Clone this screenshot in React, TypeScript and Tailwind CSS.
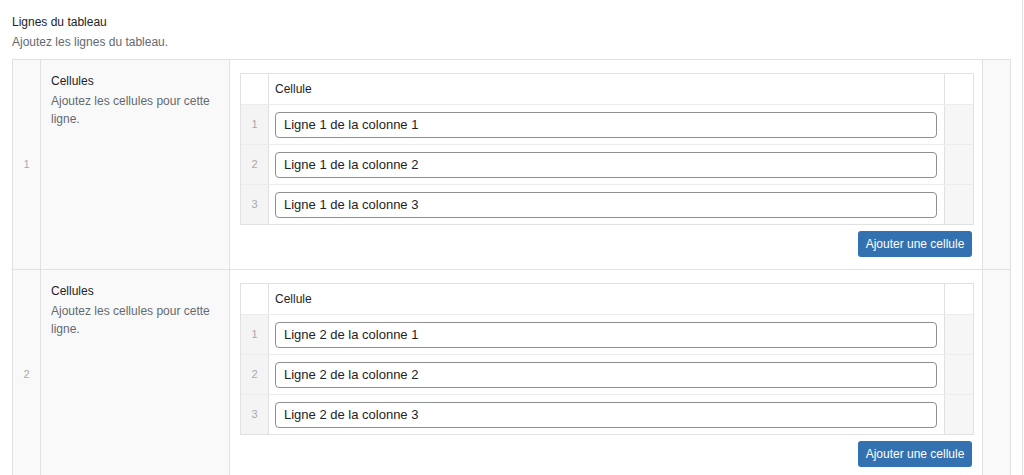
const rows = [1, 2]
const cells = [1, 2, 3]

function CellTable({ row }: { row: number }) {
  return (
    <div className="border border-[#e1e1e1]">
      <div className="flex h-[30px]">
        <div className="w-[28px] border-r border-[#e1e1e1]" />
        <div className="flex flex-1 items-center pl-[6px] text-[12px] text-[#1d2327]">Cellule</div>
        <div className="w-[29px] border-l border-[#e1e1e1]" />
      </div>
      {cells.map((c) => (
        <div key={c} className="flex h-[40px] border-t border-[#ececec]">
          <div className="flex w-[28px] items-center justify-center border-r border-[#e1e1e1] bg-[#f4f4f4] text-[11px] text-[#a7aaad]">
            {c}
          </div>
          <div className="flex flex-1 items-center pl-[6px] pr-[7px]">
            <input
              readOnly
              value={`Ligne ${row} de la colonne ${c}`}
              className="h-[26px] w-full rounded-[4px] border border-[#8c8f94] bg-white px-[8px] text-[13px] text-[#1d2327] outline-none"
            />
          </div>
          <div className="w-[29px] border-l border-[#e1e1e1] bg-[#f6f6f6]" />
        </div>
      ))}
    </div>
  )
}

export default function App() {
  return (
    <div
      className="h-[475px] w-[1023px] overflow-hidden border-r border-[#e0e0e0] bg-white pl-3 pr-[11px]"
      style={{ fontFamily: '"Liberation Sans", Arial, sans-serif' }}
    >
      <div className="pt-[14px] text-[12px] leading-[16px] text-[#1d2327]">Lignes du tableau</div>
      <div className="mt-[3px] text-[12px] leading-[18px] text-[#646970]">Ajoutez les lignes du tableau.</div>

      <div className="mt-[8px] border border-[#e1e1e1]">
        {rows.map((r, i) => (
          <div key={r} className={`flex ${i > 0 ? "border-t border-[#e1e1e1]" : ""}`}>
            <div className="flex w-[28px] shrink-0 items-center justify-center border-r border-[#e1e1e1] bg-[#f9f9f9] text-[11px] text-[#a7aaad]">
              {r}
            </div>
            <div className="w-[189px] shrink-0 border-r border-[#e1e1e1] bg-[#f9f9f9] pl-[10px] pr-[14px] pt-[13px]">
              <div className="text-[12px] leading-[17px] text-[#1d2327]">Cellules</div>
              <div className="mt-[2px] text-[12px] leading-[18px] text-[#646970]">
                Ajoutez les cellules pour cette ligne.
              </div>
            </div>
            <div className="flex-1 pb-[12px] pl-[10px] pr-[8px] pt-[13px]">
              <CellTable row={r} />
              <div className="mt-[6px] flex justify-end pr-[2px]">
                <button className="h-[26px] w-[114px] rounded-[3px] bg-[#3471b1] text-[12px] text-white">
                  Ajouter une cellule
                </button>
              </div>
            </div>
            <div className="w-[28px] shrink-0 border-l border-[#e1e1e1] bg-[#f9f9f9]" />
          </div>
        ))}
      </div>
    </div>
  )
}
